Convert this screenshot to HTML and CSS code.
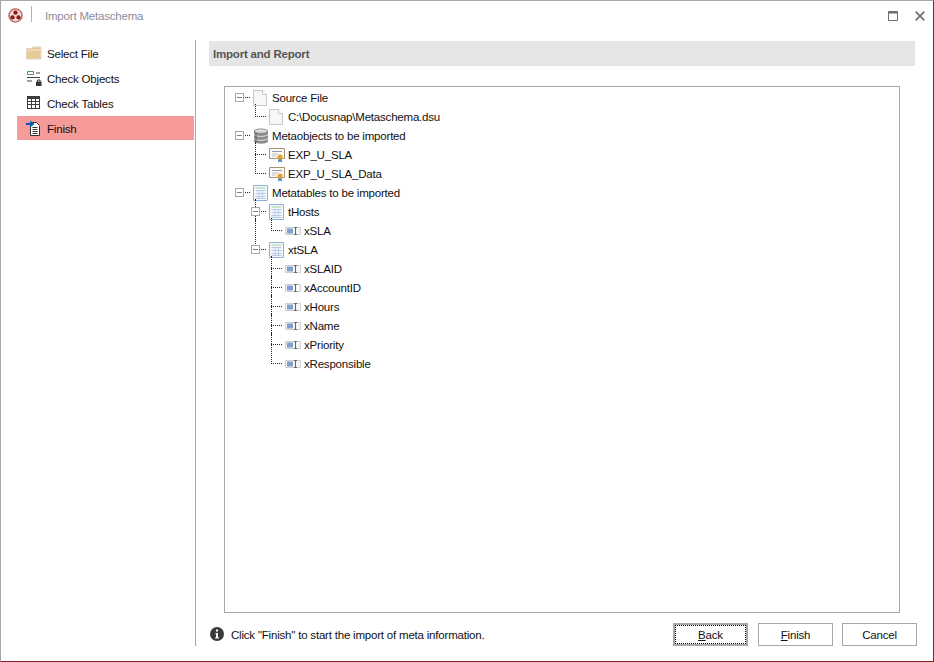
FILE: index.html
```html
<!DOCTYPE html>
<html lang="en">
<head>
    <meta charset="UTF-8">
    <title>Import Metaschema</title>
    <link rel="stylesheet" href="styles.css">
</head>
<body>
    <svg class="sprites" width="0" height="0">
        <symbol id="i-page" viewBox="0 0 16 16">
            <path d="M.5 .5h9l4 4v11H.5z" fill="#f7f7f7" stroke="#c8c8c8"/>
            <path d="M9.5 .5v4h4" fill="#fff" stroke="#c8c8c8"/>
        </symbol>
        <symbol id="i-db" viewBox="0 0 16 16">
            <path d="M1 3c0-3.500 14-3.500 14 0v10c0 3.500-14 3.500-14 0z" fill="#8c8c8c"/>
            <ellipse cx="8" cy="3" rx="6" ry="1.800" fill="#dcdcdc"/>
            <path d="M1 6.500c2 2.500 12 2.500 14 0M1 10.500c2 2.500 12 2.500 14 0" fill="none" stroke="#e4e4e4"/>
            <path d="M3 5v9" stroke="#5c5c5c"/>
        </symbol>
        <symbol id="i-cert" viewBox="0 0 16 16">
            <path d="M.5 1.500h15v10H.5z" fill="#fdfaf4" stroke="#a8926e"/>
            <path d="M3 4.500h10" stroke="#8a9ab0"/>
            <path d="M3 7h6M3 9h4" stroke="#bcbcbc"/>
            <path d="M9.500 11l-.5 4.500 2-1 2 1-.5-4.500z" fill="#4a80c4"/>
            <circle cx="11" cy="10" r="2.600" fill="#e2a032"/>
        </symbol>
        <symbol id="i-table" viewBox="0 0 16 16">
            <path d="M.5 .5h14v15H.5z" fill="#f4f8fd" stroke="#8cb0dc"/>
            <path d="M2.500 3h10" stroke="#a4d094"/>
            <path d="M2.500 5.500h10M2.500 8.500h10M2.500 11.500h10M2.500 13.500h10M6 5.500v8M9.500 5.500v8" stroke="#b8cbe4" fill="none"/>
        </symbol>
        <symbol id="i-field" viewBox="0 0 16 8">
            <path d="M.5 .5h15v7H.5z" fill="#f4f4f4" stroke="#d0d0d0"/>
            <path d="M2 1.500h6v5H2z" fill="#7f9fce"/>
            <path d="M9 .5h3M9 7.500h3M10.500 .5v7" stroke="#666" fill="none"/>
        </symbol>
    </svg>

    <div class="window">
        <header class="titlebar">
            <svg class="app-icon" width="15" height="15" viewBox="0 0 16 16">
                <circle cx="8" cy="8" r="7" fill="#f2d9d9" stroke="#b65a5a" stroke-width="1.400"/>
                <circle cx="8" cy="5" r="2.300" fill="#8f1818"/>
                <circle cx="4.800" cy="10" r="2.300" fill="#8f1818"/>
                <circle cx="11.200" cy="10" r="2.300" fill="#8f1818"/>
            </svg>
            <span class="title-sep"></span>
            <span class="title-text">Import Metaschema</span>
            <svg class="win-btn win-max" width="10" height="10" viewBox="0 0 10 10">
                <path d="M.5 .5h9v9h-9z" fill="none" stroke="#6e6e6e"/>
                <path d="M0 1.500h10" stroke="#6e6e6e" stroke-width="2"/>
            </svg>
            <svg class="win-btn win-close" width="10" height="10" viewBox="0 0 10 10">
                <path d="M.7 .7l8.600 8.600M9.300 .7l-8.600 8.600" stroke="#6e6e6e" stroke-width="1.700"/>
            </svg>
        </header>

        <div class="content">
            <nav class="sidebar">
                <div class="nav-item">
                    <svg width="16" height="16" viewBox="0 0 16 16">
                        <path d="M.5 3.500H6L7 2h8v12H.5z" fill="#e8ca96" stroke="#e0d8c8"/>
                        <path d="M.5 6L6 5h9" fill="none" stroke="#f4e8d0"/>
                    </svg>
                    <span>Select File</span>
                </div>
                <div class="nav-item">
                    <svg width="16" height="16" viewBox="0 0 16 16">
                        <path d="M1.500 1.500h6v3h-6z" fill="none" stroke="#4f9a4f"/>
                        <path d="M10 3h4M1 7.500h13M1 11h5" stroke="#444" fill="none"/>
                        <path d="M10 11.500h5.500V16H10z" fill="#333"/>
                        <path d="M11.500 11.500V10h2.500v1.500" fill="none" stroke="#333"/>
                    </svg>
                    <span>Check Objects</span>
                </div>
                <div class="nav-item">
                    <svg width="16" height="16" viewBox="0 0 16 16">
                        <path d="M1 1h13v13H1z" fill="#3c3c3c"/>
                        <path d="M2 4h3v2H2zM6 4h3v2H6zM10 4h3v2h-3zM2 7h3v2H2zM6 7h3v2H6zM10 7h3v2h-3zM2 10h3v3H2zM6 10h3v3H6zM10 10h3v3h-3z" fill="#fff"/>
                    </svg>
                    <span>Check Tables</span>
                </div>
                <div class="nav-item active">
                    <svg width="16" height="16" viewBox="0 0 16 16">
                        <path d="M4.500 2.500h6l3 3v10h-9z" fill="#fff" stroke="#333"/>
                        <path d="M6.500 7.500h5M6.500 9.500h5M6.500 11.500h5M6.500 13.500h5" stroke="#333"/>
                        <path d="M0 3h4V.5L8.500 4 4 7.500V5H0z" fill="#0b5ca8"/>
                    </svg>
                    <span>Finish</span>
                </div>
            </nav>

            <main class="main">
                <h2 class="panel-head">Import and Report</h2>

                <div class="tree">
                    <div class="row">
                        <span class="gutter branch"><i class="expander"></i></span>
                        <svg class="icon"><use href="#i-page"/></svg>
                        <span>Source File</span>
                    </div>
                    <div class="row">
                        <span class="gutter"></span>
                        <span class="gutter last branch"></span>
                        <svg class="icon"><use href="#i-page"/></svg>
                        <span>C:\Docusnap\Metaschema.dsu</span>
                    </div>
                    <div class="row">
                        <span class="gutter branch"><i class="expander"></i></span>
                        <svg class="icon"><use href="#i-db"/></svg>
                        <span>Metaobjects to be imported</span>
                    </div>
                    <div class="row">
                        <span class="gutter"></span>
                        <span class="gutter tee branch"></span>
                        <svg class="icon"><use href="#i-cert"/></svg>
                        <span>EXP_U_SLA</span>
                    </div>
                    <div class="row">
                        <span class="gutter"></span>
                        <span class="gutter last branch"></span>
                        <svg class="icon"><use href="#i-cert"/></svg>
                        <span>EXP_U_SLA_Data</span>
                    </div>
                    <div class="row">
                        <span class="gutter branch"><i class="expander"></i></span>
                        <svg class="icon"><use href="#i-table"/></svg>
                        <span>Metatables to be imported</span>
                    </div>
                    <div class="row">
                        <span class="gutter"></span>
                        <span class="gutter tee branch"><i class="expander"></i></span>
                        <svg class="icon"><use href="#i-table"/></svg>
                        <span>tHosts</span>
                    </div>
                    <div class="row">
                        <span class="gutter"></span>
                        <span class="gutter tee"></span>
                        <span class="gutter last branch"></span>
                        <svg class="icon"><use href="#i-field"/></svg>
                        <span>xSLA</span>
                    </div>
                    <div class="row">
                        <span class="gutter"></span>
                        <span class="gutter last branch"><i class="expander"></i></span>
                        <svg class="icon"><use href="#i-table"/></svg>
                        <span>xtSLA</span>
                    </div>
                    <div class="row">
                        <span class="gutter"></span>
                        <span class="gutter"></span>
                        <span class="gutter tee branch"></span>
                        <svg class="icon"><use href="#i-field"/></svg>
                        <span>xSLAID</span>
                    </div>
                    <div class="row">
                        <span class="gutter"></span>
                        <span class="gutter"></span>
                        <span class="gutter tee branch"></span>
                        <svg class="icon"><use href="#i-field"/></svg>
                        <span>xAccountID</span>
                    </div>
                    <div class="row">
                        <span class="gutter"></span>
                        <span class="gutter"></span>
                        <span class="gutter tee branch"></span>
                        <svg class="icon"><use href="#i-field"/></svg>
                        <span>xHours</span>
                    </div>
                    <div class="row">
                        <span class="gutter"></span>
                        <span class="gutter"></span>
                        <span class="gutter tee branch"></span>
                        <svg class="icon"><use href="#i-field"/></svg>
                        <span>xName</span>
                    </div>
                    <div class="row">
                        <span class="gutter"></span>
                        <span class="gutter"></span>
                        <span class="gutter tee branch"></span>
                        <svg class="icon"><use href="#i-field"/></svg>
                        <span>xPriority</span>
                    </div>
                    <div class="row">
                        <span class="gutter"></span>
                        <span class="gutter"></span>
                        <span class="gutter last branch"></span>
                        <svg class="icon"><use href="#i-field"/></svg>
                        <span>xResponsible</span>
                    </div>
                </div>

                <footer class="footer">
                    <svg class="info-icon" width="14" height="14" viewBox="0 0 14 14">
                        <circle cx="7" cy="7" r="7" fill="#3a3a3a"/>
                        <path d="M6 2.500h2v2H6zM5.500 6h2.500v4.500h1v1H5v-1h1V7h-.5z" fill="#fff"/>
                    </svg>
                    <span class="hint">Click "Finish" to start the import of meta information.</span>
                    <button class="btn btn-back"><u>B</u>ack</button>
                    <button class="btn"><u>F</u>inish</button>
                    <button class="btn">Cancel</button>
                </footer>
            </main>
        </div>
    </div>
</body>
</html>
```

FILE: styles.css
```css
* {
    box-sizing: border-box;
}

body {
    margin: 0;
    background: white;
    font-family: "Liberation Sans", Arial, sans-serif;
    font-size: 11.5px;
    letter-spacing: -0.2px;
    color: #111;
}

.sprites {
    display: block;
}

.window {
    width: 934px;
    height: 662px;
    display: flex;
    flex-direction: column;
    border: 1px solid #a8a8a8;
    border-right-color: #8a1f24;
    border-bottom-color: #8a1f24;
}

.titlebar {
    height: 39px;
    display: flex;
    align-items: flex-start;
    padding: 7px 8px 0 7px;
}

.title-sep {
    width: 1px;
    height: 16px;
    margin: -2px 13px 0 8px;
    background: #b0b0b0;
}

.title-text {
    flex: 1;
    line-height: 16px;
    color: #8c8c9c;
}

.win-btn {
    margin-top: 3px;
}

.win-max {
    margin-right: 17px;
}

.content {
    flex: 1;
    display: flex;
    min-height: 0;
    margin-bottom: 15px;
}

.sidebar {
    width: 195px;
    flex: none;
    display: flex;
    flex-direction: column;
    gap: 1px;
    padding: 1px 1px 0 16px;
    border-right: 1px solid #a8a8a8;
}

.nav-item {
    height: 24px;
    display: flex;
    align-items: center;
    gap: 5px;
    padding-left: 9px;
}

.nav-item span {
    padding-top: 2px;
}

.nav-item.active {
    background: #f69a9a;
}

.main {
    flex: 1;
    min-width: 0;
    display: flex;
    flex-direction: column;
    padding: 1px 0 0 13px;
}

.panel-head {
    height: 25px;
    margin: 0 18px 0 0;
    padding-left: 4px;
    background: #e5e5e5;
    font-size: 11.5px;
    line-height: 27px;
    font-weight: 700;
    color: #555;
}

.tree {
    flex: 1;
    margin: 20px 33px 0 15px;
    padding: 1px 0 0 8px;
    border: 1px solid #a8a8a8;
}

.row {
    height: 19px;
    display: flex;
    align-items: center;
    white-space: nowrap;
}

.gutter {
    position: relative;
    width: 16px;
    height: 19px;
    flex: none;
}

.gutter + .icon {
    margin-left: 4px;
}

.icon {
    width: 16px;
    height: 16px;
    flex: none;
    margin-right: 3px;
}

/* vertical part of the connector */
.tee::before,
.last::before {
    content: "";
    position: absolute;
    left: 6px;
    top: -3px;
    bottom: 0;
    border-left: 1px dotted #222;
}

.last::before {
    bottom: 9px;
}

/* horizontal part */
.branch::after {
    content: "";
    position: absolute;
    left: 6px;
    top: 9px;
    width: 11px;
    border-top: 1px dotted #222;
}

.expander {
    position: absolute;
    left: 2px;
    top: 5px;
    z-index: 1;
    width: 9px;
    height: 9px;
    background: white;
    border: 1px solid #a8a8a8;
}

.expander::after {
    content: "";
    position: absolute;
    left: 1px;
    top: 3px;
    width: 5px;
    height: 1px;
    background: #808080;
}

.footer {
    height: 23px;
    flex: none;
    display: flex;
    align-items: center;
    gap: 9px;
    margin-top: 10px;
    padding: 0 16px 0 1px;
}

.info-icon {
    flex: none;
    margin-top: -2px;
}

.hint {
    flex: 1;
    margin-left: -2px;
}

.btn {
    width: 75px;
    height: 23px;
    padding: 0;
    background: white;
    border: 1px solid #a8a8a8;
    font: inherit;
    letter-spacing: inherit;
    color: #111;
}

.btn-back {
    margin-right: 1px;
    border-width: 2px;
    outline: 1px dotted #000;
    outline-offset: -3px;
}
```
